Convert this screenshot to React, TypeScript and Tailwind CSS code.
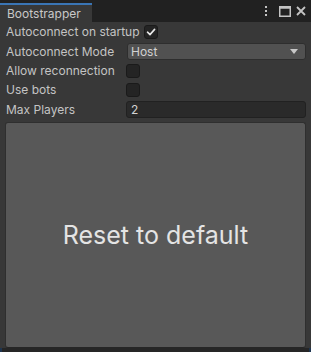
import React from "react";

const font = { fontFamily: "Inter, 'Noto Sans', sans-serif" };

function Checkbox({ checked }: { checked?: boolean }) {
  return (
    <div className="w-[14px] h-[14px] shrink-0 rounded-[3px] bg-[#242424] border border-[#1a1a1a] flex items-center justify-center">
      {checked && (
        <svg width="10" height="10" viewBox="0 0 10 10">
          <path d="M1.5 5.2 L4 7.6 L8.6 2.4" stroke="#e8e8e8" strokeWidth="1.6" fill="none" strokeLinecap="round" strokeLinejoin="round" />
        </svg>
      )}
    </div>
  );
}

export default function App() {
  return (
    <div className="w-[311px] h-[352px] bg-[#383838] flex flex-col text-[#c4c4c4] text-[12px] leading-none overflow-hidden whitespace-nowrap" style={font}>
      {/* title bar */}
      <div className="h-[22px] bg-[#212121] flex items-end shrink-0">
        <div className="w-[92px] h-[19px] bg-[#383838] border-t-2 border-[#3a75b5] pl-[7px] flex items-center text-[12px] text-[#c8c8c8]">
          Bootstrapper
        </div>
        <div className="flex-1 h-full flex items-center justify-end pr-[5px]">
          <svg width="4" height="12" viewBox="0 0 4 12" className="mr-[11px]">
            <rect x="1" y="1" width="2" height="2" fill="#c4c4c4" />
            <rect x="1" y="5" width="2" height="2" fill="#c4c4c4" />
            <rect x="1" y="9" width="2" height="2" fill="#c4c4c4" />
          </svg>
          <svg width="12" height="11" viewBox="0 0 12 11" className="mr-[5px]">
            <rect x="0.75" y="0.75" width="10.5" height="9.5" stroke="#c4c4c4" strokeWidth="1.5" fill="none" />
            <rect x="0.75" y="0.75" width="10.5" height="2" fill="#c4c4c4" />
          </svg>
          <svg width="10" height="10" viewBox="0 0 10 10">
            <path d="M1 1 L9 9 M9 1 L1 9" stroke="#c4c4c4" strokeWidth="1.8" />
          </svg>
        </div>
      </div>

      <div className="flex flex-col pl-[6px] pr-[5px] flex-1">
        {/* row 1 */}
        <div className="h-[19px] flex items-center shrink-0">
          <span className="w-[138px] shrink-0">Autoconnect on startup</span>
          <Checkbox checked />
        </div>
        {/* row 2 */}
        <div className="mt-[2px] h-[17px] flex items-center shrink-0">
          <span className="w-[121px] shrink-0">Autoconnect Mode</span>
          <div className="flex-1 h-full rounded-[3px] bg-[#515151] border border-[#2e2e2e] flex items-center justify-between pl-[3px] pr-[7px] text-[#d2d2d2]">
            <span>Host</span>
            <svg width="8" height="5" viewBox="0 0 8 5">
              <path d="M0 0 L8 0 L4 5 Z" fill="#c8c8c8" />
            </svg>
          </div>
        </div>
        {/* row 3 */}
        <div className="mt-[1px] h-[19px] flex items-center shrink-0">
          <span className="w-[120px] shrink-0">Allow reconnection</span>
          <Checkbox />
        </div>
        {/* row 4 */}
        <div className="h-[19px] flex items-center shrink-0">
          <span className="w-[120px] shrink-0">Use bots</span>
          <Checkbox />
        </div>
        {/* row 5 */}
        <div className="mt-[2px] h-[17px] flex items-center shrink-0">
          <span className="w-[120px] shrink-0">Max Players</span>
          <div className="flex-1 h-full rounded-[3px] bg-[#2a2a2a] border border-[#212121] flex items-center pl-[4px] text-[#d2d2d2]">
            2
          </div>
        </div>
        {/* button */}
        <div className="mt-[4px] ml-[-1px] h-[226px] rounded-[3px] bg-[#585858] border border-[#2f2f2f] border-b-[#262626] flex items-center justify-center text-[25px] text-[#e4e4e4] shrink-0">
          Reset to default
        </div>
      </div>
      <div className="h-[4px] bg-[#262626] shrink-0 border-l-2 border-r-2 border-[#1f3550]" />
    </div>
  );
}
